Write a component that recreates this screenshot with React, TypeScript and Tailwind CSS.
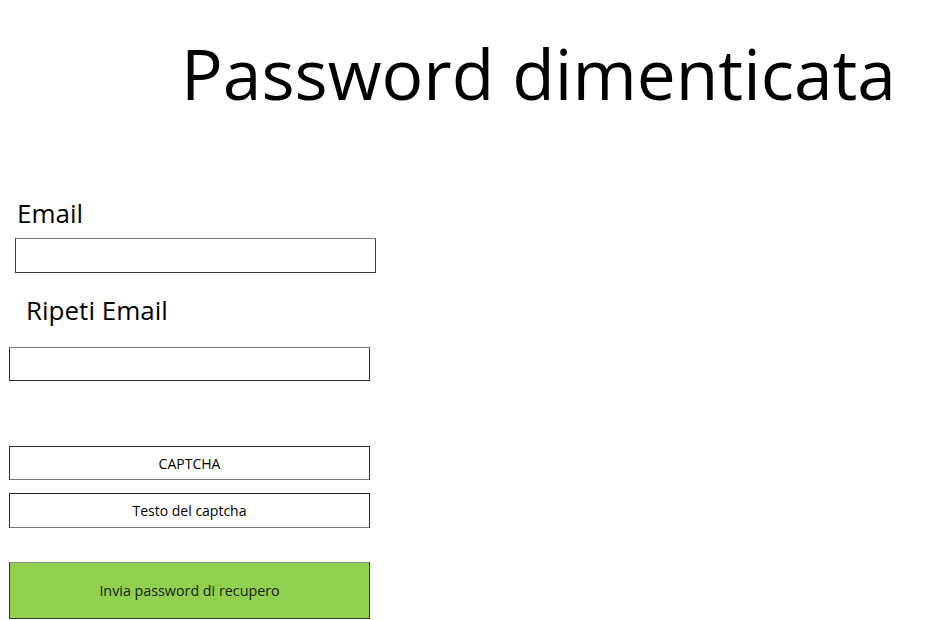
import React from "react";

const FONT = { fontFamily: '"Open Sans", "Noto Sans", sans-serif' };

export default function App() {
  return (
    <div className="flex flex-col w-[937px] h-[620px] bg-white text-black overflow-hidden" style={FONT}>
      {/* Title */}
      <h1 className="pt-[33px] pl-[181px] text-[69.5px] leading-[80px] font-normal whitespace-nowrap">
        Password dimenticata
      </h1>

      {/* Email */}
      <label htmlFor="email" className="mt-[85px] ml-[17px] text-[26px] leading-[30px]">
        Email
      </label>
      <input
        id="email"
        type="email"
        className="mt-[10px] ml-[15px] w-[361px] h-[35px] border border-[#3a3a3a] border-t-[#7a7a7a] bg-white outline-none px-2"
      />

      {/* Ripeti Email */}
      <label htmlFor="email2" className="mt-[22px] ml-[26px] text-[26px] leading-[30px]">
        Ripeti Email
      </label>
      <input
        id="email2"
        type="email"
        className="mt-[22px] ml-[9px] w-[361px] h-[34px] border border-[#2a2a2a] border-t-[#7a7a7a] bg-white outline-none px-2"
      />

      {/* Captcha */}
      <div className="mt-[65px] ml-[9px] w-[361px] h-[34px] flex items-center justify-center border border-[#2a2a2a] border-b-[#7a7a7a] text-[14px]">
        CAPTCHA
      </div>
      <div className="mt-[13px] ml-[9px] w-[361px] h-[35px] flex items-center justify-center border border-[#2a2a2a] border-b-[#7a7a7a] text-[14px]">
        Testo del captcha
      </div>

      {/* Submit */}
      <button
        type="button"
        className="mt-[34px] ml-[9px] w-[361px] h-[57px] flex items-center justify-center bg-[#92d050] border border-[#2f3a26] border-t-[#8a8a8a] text-[14.3px] text-[#16200e]"
      >
        Invia password di recupero
      </button>
    </div>
  );
}
